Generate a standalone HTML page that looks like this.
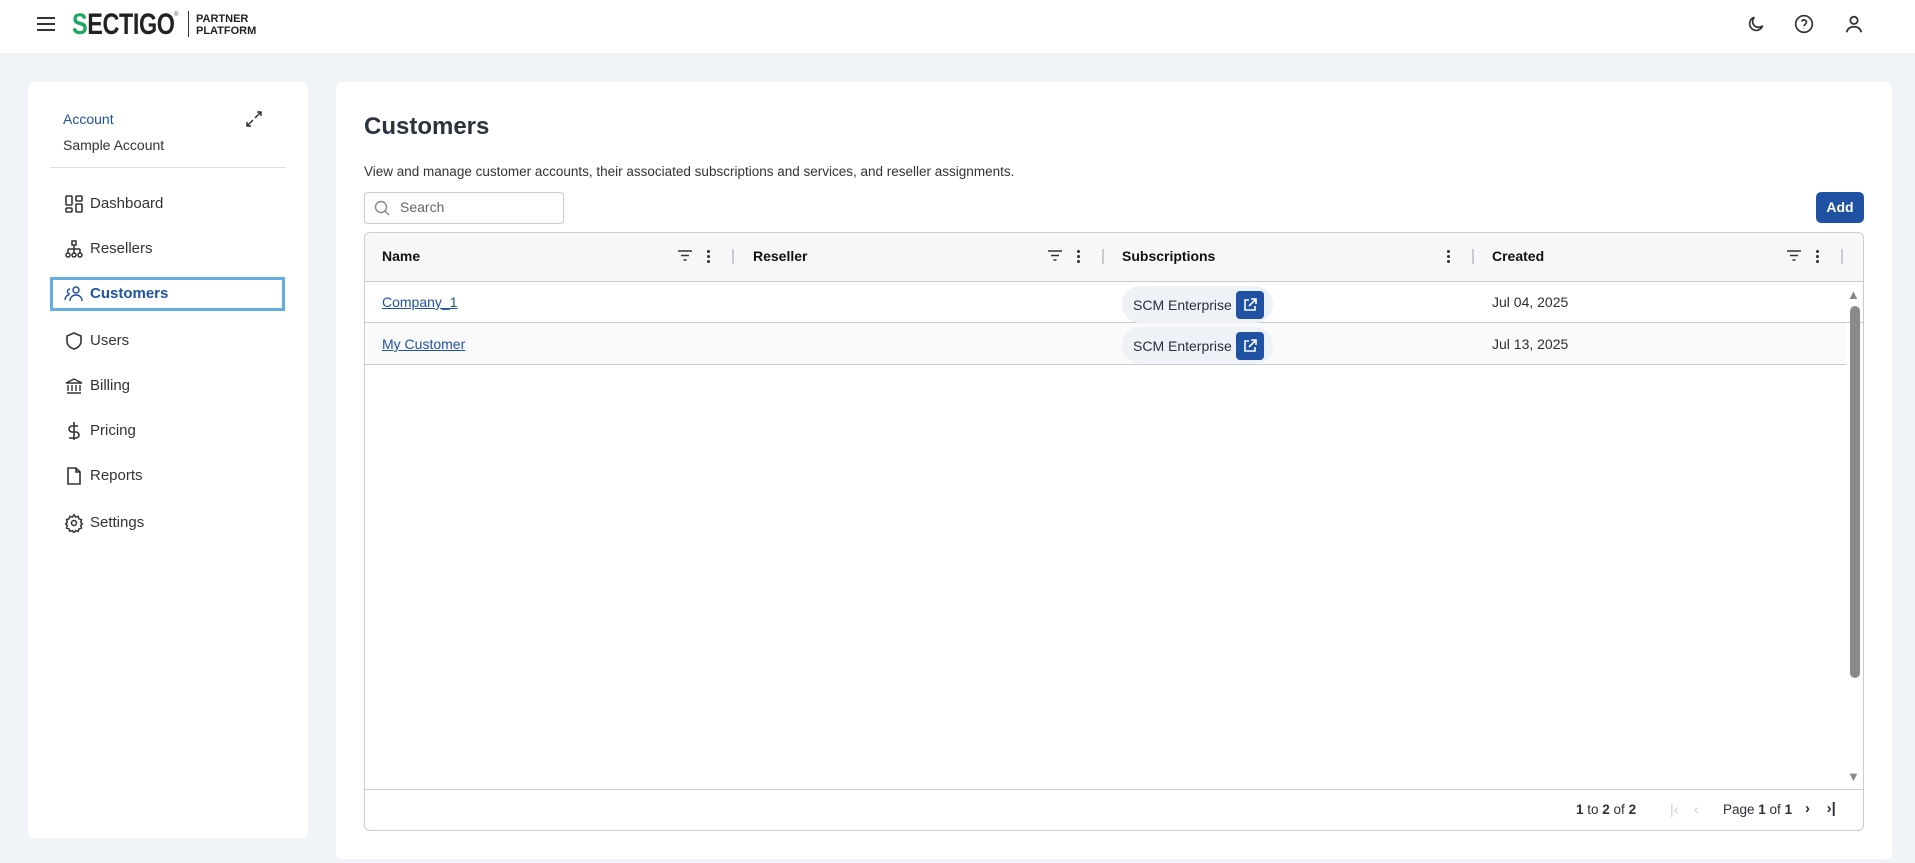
<!DOCTYPE html>
<html><head><meta charset="utf-8"><style>
*{box-sizing:border-box;margin:0;padding:0}
body{width:1915px;height:863px;background:#f0f3f8;font-family:"Liberation Sans",sans-serif;color:#2b2f38;position:relative;overflow:hidden}
.hdr{position:absolute;left:0;top:0;width:1915px;height:53px;background:#fff}
.card{position:absolute;background:#fff;border-radius:6px}
.nav{position:absolute;left:64px;font-size:15px;color:#333;display:flex;align-items:center}
.nav svg{position:absolute;left:0;width:20px;height:20px;top:-10px}
.nav span{position:absolute;left:26px;top:-9px;white-space:nowrap}
.th{position:absolute;top:248px;font-size:14px;font-weight:bold;color:#111}
.sep{position:absolute;top:249px;width:2px;height:15px;background:#c8ccd2}
.dots{position:absolute;top:249px;width:3px;height:14px;background:radial-gradient(circle,#333 1.4px,transparent 1.6px) 0 0/3px 5px}
.filt{position:absolute;top:250px;width:14px;height:11px}
.cell{position:absolute;font-size:14px}
.pill{position:absolute;left:1122px;height:37px;width:151px;background:#eef2f7;border-radius:18px;font-size:14px;padding:11px 0 0 11px}
.pill b{position:absolute;right:9px;top:5px;width:28px;height:28px;background:#1f52a3;border-radius:4px}
</style></head><body>
<div class="hdr">
<svg style="position:absolute;left:37px;top:17px" width="18" height="14"><path d="M0 1h18M0 7h18M0 13h18" stroke="#333" stroke-width="2"/></svg>
<div style="position:absolute;left:72px;top:10px;font-size:30px;font-weight:bold;letter-spacing:-0.5px;transform:scaleX(.78);transform-origin:left;color:#222;line-height:30px"><span style="color:#1fa865">S</span>ECTIGO</div>
<div style="position:absolute;left:174px;top:12px;font-size:6px;color:#555">®</div>
<div style="position:absolute;left:188px;top:11px;width:1px;height:26px;background:#333"></div>
<div style="position:absolute;left:196px;top:13px;font-size:11px;font-weight:bold;line-height:12px;color:#222">PARTNER<br>PLATFORM</div>
<svg style="position:absolute;left:1746px;top:14px" width="20" height="20" viewBox="0 0 24 24" fill="none" stroke="#333" stroke-width="2"><path d="M20 14A8 8 0 1 1 10 4a6 6 0 0 0 10 10z"/></svg>
<svg style="position:absolute;left:1794px;top:14px" width="20" height="20" viewBox="0 0 24 24" fill="none" stroke="#333" stroke-width="2"><circle cx="12" cy="12" r="10"/><path d="M9.2 9a3 3 0 0 1 5.8 1c0 2-3 2.5-3 4.5M12 17.5v.5"/></svg>
<svg style="position:absolute;left:1843px;top:13px" width="22" height="22" viewBox="0 0 24 24" fill="none" stroke="#333" stroke-width="2"><circle cx="12" cy="8" r="4"/><path d="M4 21c1-4 4-6 8-6s7 2 8 6"/></svg>
</div>
<div class="card" style="left:28px;top:82px;width:280px;height:756px"></div>
<div style="position:absolute;left:63px;top:111px;font-size:14px;color:#1f52a3">Account</div>
<div style="position:absolute;left:63px;top:137px;font-size:14px;color:#333">Sample Account</div>
<svg style="position:absolute;left:246px;top:111px" width="16" height="16" viewBox="0 0 16 16" fill="none" stroke="#333" stroke-width="1.5"><path d="M9 7l6-6M11 1h4v4M7 9l-6 6M1 11v4h4"/></svg>
<div style="position:absolute;left:50px;top:167px;width:236px;height:1px;background:#dde1e6"></div>
<div style="position:absolute;left:50px;top:277px;width:235px;height:34px;border:3px solid #64ade1"></div>
<div class="nav" style="top:204px"><svg viewBox="0 0 20 20" fill="none" stroke="#333" stroke-width="1.6"><rect x="2" y="2" width="6" height="9" rx="1"/><rect x="12" y="2" width="6" height="5" rx="1"/><rect x="2" y="14" width="6" height="4" rx="1"/><rect x="12" y="10" width="6" height="8" rx="1"/></svg><span>Dashboard</span></div>
<div class="nav" style="top:249px"><svg viewBox="0 0 20 20" fill="none" stroke="#333" stroke-width="1.5"><rect x="8" y="2" width="4" height="4"/><path d="M10 6v4M4 10h12M4 10v4M10 10v4M16 10v4"/><circle cx="4" cy="16" r="2"/><circle cx="10" cy="16" r="2"/><circle cx="16" cy="16" r="2"/></svg><span>Resellers</span></div>
<div class="nav" style="top:294px"><svg viewBox="0 0 20 20" fill="none" stroke="#1f52a3" stroke-width="1.5"><circle cx="12" cy="6" r="3"/><path d="M6 17c0-4 3-6 6-6s6 2 6 6M6 5a2.5 2.5 0 1 0 0 5M1 16c0-3 2-5 4-5"/></svg><span style="color:#1f52a3;font-weight:bold">Customers</span></div>
<div class="nav" style="top:341px"><svg viewBox="0 0 20 20" fill="none" stroke="#333" stroke-width="1.6"><path d="M10 2l7 3v5c0 4-3 7-7 8-4-1-7-4-7-8V5z"/></svg><span>Users</span></div>
<div class="nav" style="top:386px"><svg viewBox="0 0 20 20" fill="none" stroke="#333" stroke-width="1.4"><path d="M2 7l8-4 8 4zM3 17h14M4 9v6M8 9v6M12 9v6M16 9v6"/></svg><span>Billing</span></div>
<div class="nav" style="top:431px"><svg viewBox="0 0 20 20" fill="none" stroke="#333" stroke-width="1.6"><path d="M10 1v18M14 5H8a3 3 0 0 0 0 6h4a3 3 0 0 1 0 6H5"/></svg><span>Pricing</span></div>
<div class="nav" style="top:476px"><svg viewBox="0 0 20 20" fill="none" stroke="#333" stroke-width="1.6"><path d="M4 2h8l4 4v12H4zM12 2v4h4"/></svg><span>Reports</span></div>
<div class="nav" style="top:523px"><svg viewBox="0 0 24 24" fill="none" stroke="#333" stroke-width="1.8"><circle cx="12" cy="12" r="3"/><path d="M12 2l2 3 3-1 1 3 3 1-1 3 2 2-2 2 1 3-3 1-1 3-3-1-2 3-2-3-3 1-1-3-3-1 1-3-2-2 2-2-1-3 3-1 1-3 3 1z"/></svg><span>Settings</span></div>

<div class="card" style="left:336px;top:82px;width:1556px;height:777px"></div>
<div style="position:absolute;left:364px;top:113px;font-size:24px;font-weight:bold;color:#2b3340">Customers</div>
<div style="position:absolute;left:364px;top:164px;font-size:13.5px;color:#333">View and manage customer accounts, their associated subscriptions and services, and reseller assignments.</div>
<div style="position:absolute;left:364px;top:192px;width:200px;height:32px;border:1px solid #c8ccd2;border-radius:4px"></div>
<svg style="position:absolute;left:374px;top:200px" width="16" height="16" viewBox="0 0 16 16" fill="none" stroke="#888" stroke-width="1.4"><circle cx="7" cy="7" r="5.5"/><path d="M11 11l4 4"/></svg>
<div style="position:absolute;left:400px;top:199px;font-size:14px;color:#666">Search</div>
<div style="position:absolute;left:1816px;top:192px;width:48px;height:31px;background:#1f52a3;border-radius:5px;color:#fff;font-size:14px;font-weight:bold;text-align:center;line-height:31px">Add</div>
<div style="position:absolute;left:364px;top:232px;width:1500px;height:599px;border:1px solid #c8ccd2;border-radius:6px;overflow:hidden">
<div style="height:49px;background:#f7f7f7;border-bottom:1px solid #c8ccd2"></div>
<div style="height:41px;border-bottom:1px solid #c8ccd2"></div>
<div style="height:42px;background:#fafafa;border-bottom:1px solid #c8ccd2;width:1481px"></div>
<div style="position:absolute;left:0;top:556px;width:100%;height:1px;background:#c8ccd2"></div>
<div style="position:absolute;left:1482px;top:54px;font-size:13px;color:#888">▲</div>
<div style="position:absolute;left:1485px;top:73px;width:10px;height:372px;background:#8a8a8a;border-radius:5px"></div>
<div style="position:absolute;left:1482px;top:536px;font-size:13px;color:#888">▼</div>
</div>
<div class="th" style="left:382px">Name</div>
<div class="th" style="left:753px">Reseller</div>
<div class="th" style="left:1122px">Subscriptions</div>
<div class="th" style="left:1492px">Created</div>
<svg class="filt" style="left:678px" viewBox="0 0 14 11"><path d="M0 1h14M3 5.5h8M5.5 10h3" stroke="#333" stroke-width="1.6"/></svg>
<div class="dots" style="left:707px"></div><div class="sep" style="left:732px"></div>
<svg class="filt" style="left:1048px" viewBox="0 0 14 11"><path d="M0 1h14M3 5.5h8M5.5 10h3" stroke="#333" stroke-width="1.6"/></svg>
<div class="dots" style="left:1077px"></div><div class="sep" style="left:1102px"></div>
<div class="dots" style="left:1447px"></div><div class="sep" style="left:1472px"></div>
<svg class="filt" style="left:1787px" viewBox="0 0 14 11"><path d="M0 1h14M3 5.5h8M5.5 10h3" stroke="#333" stroke-width="1.6"/></svg>
<div class="dots" style="left:1816px"></div><div class="sep" style="left:1841px"></div>
<div class="cell" style="left:382px;top:294px;color:#1f52a3;text-decoration:underline">Company_1</div>
<div class="cell" style="left:382px;top:336px;color:#1f52a3;text-decoration:underline">My Customer</div>
<div class="pill" style="top:286px">SCM Enterprise<b><svg width="28" height="28" viewBox="0 0 28 28" fill="none" stroke="#fff" stroke-width="1.6"><path d="M13 9H9v10h10v-4M15 8h5v5M20 8l-7 7"/></svg></b></div>
<div class="pill" style="top:327px">SCM Enterprise<b><svg width="28" height="28" viewBox="0 0 28 28" fill="none" stroke="#fff" stroke-width="1.6"><path d="M13 9H9v10h10v-4M15 8h5v5M20 8l-7 7"/></svg></b></div>
<div class="cell" style="left:1492px;top:294px">Jul 04, 2025</div>
<div class="cell" style="left:1492px;top:336px">Jul 13, 2025</div>
<div class="cell" style="left:1576px;top:802px;font-size:13.5px"><b>1</b> to <b>2</b> of <b>2</b></div>
<div class="cell" style="left:1670px;top:801px;color:#ccc;font-size:14px">|&lsaquo;&nbsp;&nbsp;&nbsp;&nbsp;&lsaquo;</div>
<div class="cell" style="left:1723px;top:802px;font-size:13.5px">Page <b>1</b> of <b>1</b></div>
<div class="cell" style="left:1805px;top:800px;font-size:15px;font-weight:bold">&rsaquo;&nbsp;&nbsp;&nbsp;&nbsp;&rsaquo;|</div>
</body></html>
